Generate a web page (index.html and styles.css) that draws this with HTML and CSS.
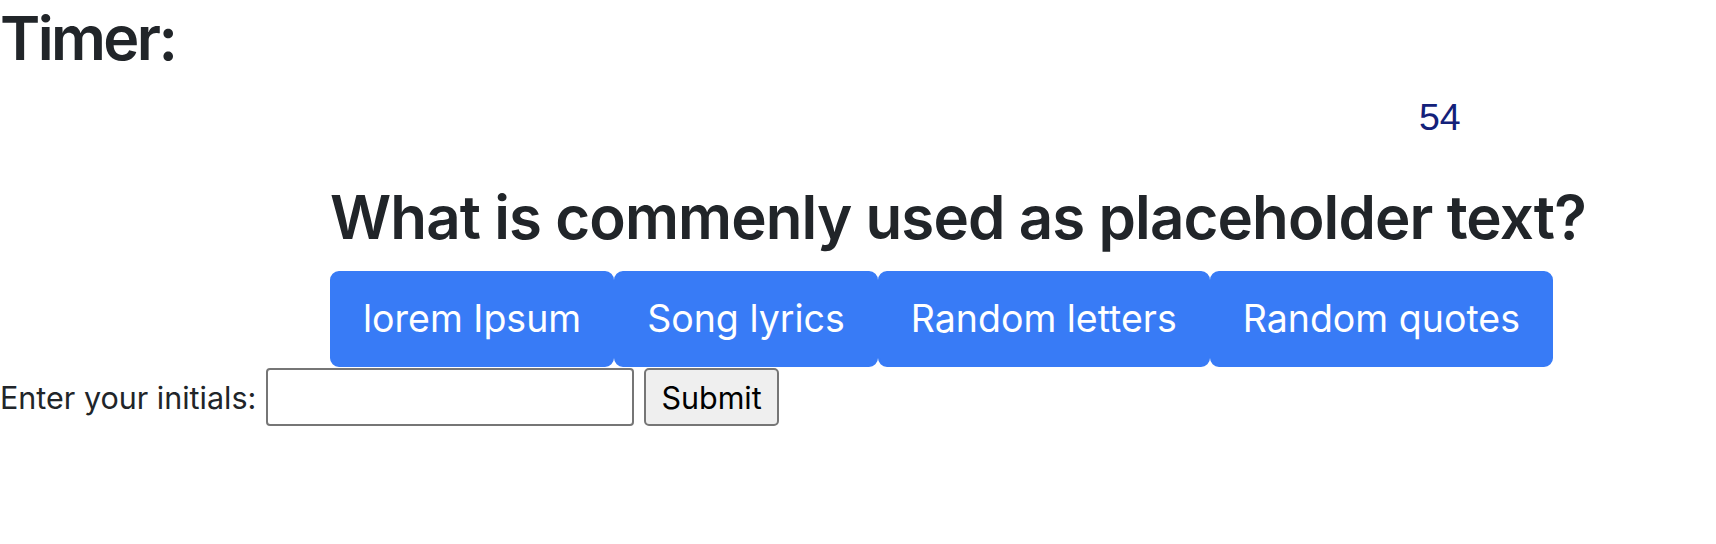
FILE: index.html
```html
<!DOCTYPE html>
<html lang="en">
<head>
<meta charset="utf-8">
<title>Quiz</title>
<link rel="stylesheet" href="styles.css">
</head>
<body>
  <header class="timer-head">
    <h1 class="timer-title">Timer:</h1>
    <div class="timer-row"><span class="timer-count">54</span></div>
  </header>
  <main class="quiz">
    <h2 class="question">What is commenly used as placeholder text?</h2>
    <div class="answers">
      <button class="answer" type="button">lorem Ipsum</button>
      <button class="answer" type="button">Song lyrics</button>
      <button class="answer" type="button">Random letters</button>
      <button class="answer" type="button">Random quotes</button>
    </div>
  </main>
  <form class="initials">
    <label class="initials-label" for="initials">Enter your initials:</label>
    <input class="initials-input" id="initials" type="text">
    <button class="submit" type="button">Submit</button>
  </form>
</body>
</html>
```
FILE: styles.css
```css
html, body {
  margin: 0;
  padding: 0;
  background: #fff;
}
body {
  font-family: Inter, "Noto Sans", sans-serif;
  color: #212529;
}
.timer-title {
  margin: 0;
  font-size: 61px;
  font-weight: 600;
  letter-spacing: -2.6px;
  line-height: 77px;
}
.timer-row {
  display: flex;
  padding-left: 1419px;
  margin-top: 19px;
}
.timer-count {
  font-family: "Liberation Sans", Arial, sans-serif;
  font-size: 37.5px;
  line-height: 43px;
  color: #13217a;
}
.quiz {
  padding-left: 330px;
}
.question {
  margin: 0 0 18px;
  padding-top: 42px;
  font-size: 60px;
  font-weight: 600;
  letter-spacing: -0.9px;
  line-height: 1.2;
}
.answers {
  display: flex;
}
.answer {
  font-family: Inter, "Noto Sans", sans-serif;
  font-size: 37.5px;
  line-height: 1.5;
  padding: 18px 31px;
  border: 2px solid #387bf6;
  border-radius: 9px;
  background: #387bf6;
  color: #fff;
}
.initials {
  display: flex;
  align-items: center;
  gap: 10px;
  margin: 1px 0 0;
}
.initials-label {
  font-size: 30.5px;
}
.initials-input {
  width: 368px;
  height: 58px;
  box-sizing: border-box;
  border: 2px solid #767676;
  border-radius: 4px;
  font-size: 30px;
}
.submit {
  height: 58px;
  box-sizing: border-box;
  padding: 0 15px;
  font-family: Inter, "Noto Sans", sans-serif;
  font-size: 30.5px;
  color: #000;
  background: #efefef;
  border: 2px solid #767676;
  border-radius: 5px;
}
```
